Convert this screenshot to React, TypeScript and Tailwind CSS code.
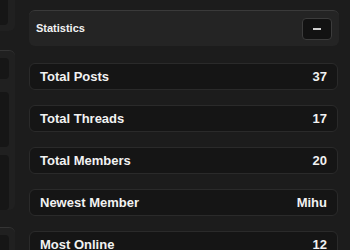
import React from 'react';

const stats = [
  { label: 'Total Posts', value: '37' },
  { label: 'Total Threads', value: '17' },
  { label: 'Total Members', value: '20' },
  { label: 'Newest Member', value: 'Mihu' },
  { label: 'Most Online', value: '12' },
];

const LeftColumn: React.FC = () => (
  <div className="w-[15px] shrink-0 flex flex-col">
    <div className="h-[31px] bg-[#202020] rounded-br-md pr-[7px] pb-[6px]">
      <div className="w-[8px] h-[25px] bg-[#161616] rounded-br" />
    </div>
    <div className="mt-[19px] h-[168px] bg-[#202020] border-t border-[#343434] rounded-tr-md rounded-br-md pt-[7px] pr-[6px] flex flex-col">
      <div className="h-[21px] bg-[#161616] rounded-r" />
      <div className="mt-[13px] h-[55px] bg-[#161616] rounded-r" />
      <div className="mt-[8px] h-[55px] bg-[#161616] rounded-r" />
    </div>
    <div className="mt-[17px] h-[40px] bg-[#202020] border-t border-[#343434] rounded-tr-md pt-[7px] pr-[6px]">
      <div className="h-[30px] bg-[#161616] rounded-r" />
    </div>
  </div>
);

export default function App() {
  return (
    <div className="w-[350px] h-[250px] overflow-hidden bg-[#1c1c1c] flex font-['Liberation_Sans',Arial,sans-serif] text-[#f2f2f2]">
      <LeftColumn />
      <div className="ml-[14px] w-[310px] shrink-0 pt-[10px]">
        <div className="h-[36px] rounded-md bg-[#242424] border-t border-[#3a3a3a] flex items-center justify-between pl-[7px] pr-[7px]">
          <span className="text-[11px] font-bold">Statistics</span>
          <button className="w-[30px] h-[22px] rounded bg-[#121212] border border-[#3c3c3c] flex items-center justify-center">
            <span className="block w-[8px] h-[2px] bg-[#d0d0d0]" />
          </button>
        </div>
        <div className="mt-[17px] flex flex-col gap-[15px] pr-[1px]">
          {stats.map((s) => (
            <div
              key={s.label}
              className="h-[27px] rounded-md bg-[#151515] border border-[#2a2a2a] flex items-center justify-between px-[10px] text-[13px] font-bold"
            >
              <span>{s.label}</span>
              <span>{s.value}</span>
            </div>
          ))}
        </div>
      </div>
    </div>
  );
}
